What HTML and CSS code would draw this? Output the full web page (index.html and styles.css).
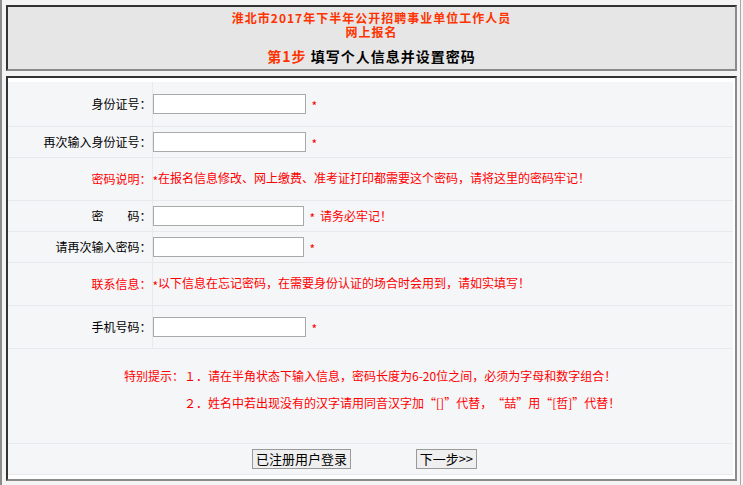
FILE: index.html
```html
<!DOCTYPE html>
<html lang="zh-CN">
<head>
    <meta charset="UTF-8">
    <title>网上报名</title>
    <link rel="stylesheet" href="styles.css">
</head>
<body>
<div class="page">
    <div class="head">
        <div class="title">淮北市2017年下半年公开招聘事业单位工作人员</div>
        <div class="title">网上报名</div>
        <div class="step"><span class="step-no">第1步</span> 填写个人信息并设置密码</div>
    </div>
    <div class="main">
        <table class="form">
            <tr class="h43">
                <td class="label">身份证号：</td>
                <td class="field"><input type="text" class="ipt"><span class="star">*</span></td>
            </tr>
            <tr class="h30">
                <td class="label">再次输入身份证号：</td>
                <td class="field"><input type="text" class="ipt"><span class="star">*</span></td>
            </tr>
            <tr class="h42">
                <td class="label red">密码说明：</td>
                <td class="field red"><span class="mark">*</span>在报名信息修改、网上缴费、准考证打印都需要这个密码，请将这里的密码牢记！</td>
            </tr>
            <tr class="h30">
                <td class="label">密　　码：</td>
                <td class="field"><input type="password" class="ipt pwd"><span class="star">*</span><span class="red note">请务必牢记！</span></td>
            </tr>
            <tr class="h30">
                <td class="label">请再次输入密码：</td>
                <td class="field"><input type="password" class="ipt pwd"><span class="star">*</span></td>
            </tr>
            <tr class="h42">
                <td class="label red">联系信息：</td>
                <td class="field red"><span class="mark">*</span>以下信息在忘记密码，在需要身份认证的场合时会用到，请如实填写！</td>
            </tr>
            <tr class="h42">
                <td class="label">手机号码：</td>
                <td class="field"><input type="text" class="ipt"><span class="star">*</span></td>
            </tr>
            <tr>
                <td colspan="2" class="tips">
                    <div class="tip-line"><span class="tip-head">特别提示：</span>１．请在半角状态下输入信息，密码长度为6-20位之间，必须为字母和数字组合！</div>
                    <div class="tip-line"><span class="tip-head"></span>２．姓名中若出现没有的汉字请用同音汉字加<span class="ql">“</span>[]<span class="qr">”</span>代替，<span class="ql">“</span>喆<span class="qr">”</span>用<span class="ql">“</span>[哲]<span class="qr">”</span>代替！</div>
                </td>
            </tr>
            <tr class="h30">
                <td colspan="2" class="btns">
                    <button type="button" class="btn">已注册用户登录</button>
                    <button type="button" class="btn">下一步&gt;&gt;</button>
                </td>
            </tr>
        </table>
    </div>
</div>
</body>
</html>
```

FILE: styles.css
```css
*
{
    margin: 0;
    padding: 0;
    box-sizing: border-box;
}
body
{
    background-color: #f4f4f4;
    font-family: "Noto Sans CJK SC", "Liberation Sans", sans-serif;
    font-size: 12px;
    color: #000;
}
.page
{
    width: 741px;
    height: 485px;
    border-left: 2px solid #8c8c8c;
    border-right: 1px solid #a8a8a8;
    padding: 5px 0 0 4px;
}
.head
{
    width: 731px;
    height: 66px;
    background-color: #e6e6e6;
    border: 2px solid #333;
    border-right-color: #8a8a8a;
    border-bottom-color: #8a8a8a;
    text-align: center;
    padding-top: 4px;
}
.title
{
    color: #ff3300;
    font-weight: bold;
    height: 14px;
    line-height: 14px;
    letter-spacing: 1px;
}
.step
{
    margin-top: 8px;
    font-size: 14px;
    font-weight: bold;
    line-height: 18px;
    letter-spacing: 1px;
}
.step-no
{
    color: #ff3300;
}
.main
{
    width: 731px;
    height: 405px;
    margin-top: 5px;
    background-color: #fff;
    border: 2px solid #333;
    border-right-color: #8a8a8a;
    border-bottom-color: #8a8a8a;
    padding-top: 4px;
}
.form
{
    width: 725px;
    border-collapse: collapse;
    background-color: #f5f6f8;
}
.form td
{
    border-bottom: 1px solid #e7e9ec;
    padding: 0;
    vertical-align: middle;
}
.h43 td { height: 44px; }
.h42 td { height: 43px; }
.h30 td { height: 31px; }
.label
{
    width: 144px;
    text-align: right;
    border-right: 1px solid #e7e9ec;
}
.red
{
    color: #ff0000;
}
.ipt
{
    width: 153px;
    height: 20px;
    border: 1px solid #a9a9a9;
    background-color: #fff;
    vertical-align: middle;
}
.ipt.pwd
{
    width: 151px;
}
.star
{
    color: #ff0000;
    margin-left: 6px;
    vertical-align: -4px;
}
.mark
{
    vertical-align: -3px;
}
.note
{
    margin-left: 5px;
    vertical-align: middle;
}
.tips
{
    height: 95px;
    color: #ff0000;
    padding: 13px 0 0 116px !important;
    vertical-align: top !important;
}
.tip-line
{
    line-height: 27px;
}
.tip-head
{
    display: inline-block;
    width: 60px;
}
.ql,
.qr
{
    display: inline-block;
    width: 12px;
}
.ql
{
    text-align: right;
}
.qr
{
    text-align: left;
}
.btns
{
    text-align: center;
    padding-right: 12px !important;
}
.btn
{
    height: 20px;
    padding: 0 3px;
    font-family: "Noto Sans CJK SC", sans-serif;
    font-size: 13px;
    line-height: 18px;
    background-color: #efefef;
    border: 1px solid #9a9a9a;
    color: #000;
    vertical-align: middle;
}
.btn + .btn
{
    margin-left: 62px;
}
```
